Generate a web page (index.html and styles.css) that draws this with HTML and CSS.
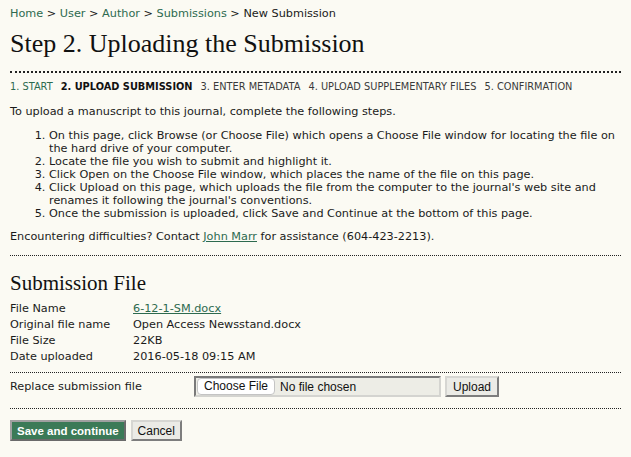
FILE: index.html
```html
<!DOCTYPE html>
<html>
<head>
<meta charset="utf-8">
<link rel="stylesheet" href="styles.css">
</head>
<body>
<div class="page">
  <div class="breadcrumb">
    <a href="#">Home</a> &gt; <a href="#">User</a> &gt; <a href="#">Author</a> &gt; <a href="#">Submissions</a> &gt; <span class="current">New Submission</span>
  </div>
  <h2 class="title">Step 2. Uploading the Submission</h2>
  <div class="separator thick"></div>
  <ul class="steps">
    <li class="done"><a href="#">1. Start</a></li>
    <li class="current">2. Upload Submission</li>
    <li>3. Enter Metadata</li>
    <li>4. Upload Supplementary Files</li>
    <li>5. Confirmation</li>
  </ul>
  <p class="intro">To upload a manuscript to this journal, complete the following steps.</p>
  <ol class="instructions">
    <li>On this page, click Browse (or Choose File) which opens a Choose File window for locating the file on the hard drive of your computer.</li>
    <li>Locate the file you wish to submit and highlight it.</li>
    <li>Click Open on the Choose File window, which places the name of the file on this page.</li>
    <li>Click Upload on this page, which uploads the file from the computer to the journal's web site and renames it following the journal's conventions.</li>
    <li>Once the submission is uploaded, click Save and Continue at the bottom of this page.</li>
  </ol>
  <p class="contact">Encountering difficulties? Contact <a href="#" class="ul">John Marr</a> for assistance (604-423-2213).</p>
  <div class="separator"></div>
  <h3 class="subtitle">Submission File</h3>
  <div class="filetable">
    <div class="label">File Name</div><div class="value"><a href="#" class="ul">6-12-1-SM.docx</a></div>
    <div class="label">Original file name</div><div class="value">Open Access Newsstand.docx</div>
    <div class="label">File Size</div><div class="value">22KB</div>
    <div class="label">Date uploaded</div><div class="value">2016-05-18 09:15 AM</div>
  </div>
  <div class="separator"></div>
  <div class="replace">
    <div class="replace-label">Replace submission file</div>
    <div class="filebox">
      <span class="choose">Choose File</span>
      <span class="nofile">No file chosen</span>
    </div>
    <button class="btn upload">Upload</button>
  </div>
  <div class="separator"></div>
  <div class="actions">
    <button class="btn primary">Save and continue</button>
    <button class="btn">Cancel</button>
  </div>
</div>
</body>
</html>
```

FILE: styles.css
```css
html, body {
  margin: 0;
  padding: 0;
  background: #fbfaf3;
}
body {
  font-family: "DejaVu Sans", Verdana, sans-serif;
  font-size: 11.25px;
  color: #1a1a1a;
}
.page {
  padding: 7px 10px 10px 10px;
}
a {
  color: #2d6a4f;
  text-decoration: none;
}
a.ul {
  text-decoration: underline;
}
.breadcrumb {
  line-height: 14px;
  color: #1a1a1a;
}
.title {
  font-family: "Liberation Serif", Georgia, serif;
  font-weight: normal;
  font-size: 26px;
  line-height: 30px;
  margin: 8px 0 12px 0;
  color: #111;
}
.separator {
  border-top: 1px dotted #222;
  height: 0;
}
.separator.thick {
  border-top-width: 2px;
}
.steps {
  list-style: none;
  margin: 7px 0 0 0;
  padding: 0;
  display: flex;
  gap: 8px;
  text-transform: uppercase;
  font-size: 9.8px;
  line-height: 14px;
  color: #3a3a3a;
}
.steps .current {
  font-weight: bold;
  color: #111;
}
.intro {
  margin: 11px 0 0 0;
  line-height: 14px;
}
.instructions {
  margin: 10px 0 0 0;
  padding-left: 39px;
  line-height: 13px;
}
.contact {
  margin: 10px 0 11px 0;
  line-height: 14px;
}
.subtitle {
  font-family: "Liberation Serif", Georgia, serif;
  font-weight: normal;
  font-size: 21px;
  line-height: 24px;
  margin: 15px 0 6px 0;
  color: #111;
}
.filetable {
  display: grid;
  grid-template-columns: 123px 1fr;
  line-height: 16px;
  margin-bottom: 7px;
}
.replace {
  display: flex;
  align-items: center;
  padding: 3px 0 11px 0;
}
.replace-label {
  width: 184px;
}
.filebox {
  box-sizing: border-box;
  display: flex;
  align-items: center;
  width: 247px;
  height: 21px;
  border: 2px solid;
  border-color: #7a7a7a #d4d4d0 #d4d4d0 #7a7a7a;
  background: #edede6;
  font-family: "Liberation Sans", Arial, sans-serif;
  font-size: 12px;
}
.choose {
  background: #fff;
  border: 1px solid #c4c4c4;
  border-radius: 4px;
  padding: 0 6px;
  line-height: 15px;
  margin-left: 1px;
  color: #111;
}
.nofile {
  margin-left: 5px;
  color: #111;
}
.btn {
  box-sizing: border-box;
  font-family: "Liberation Sans", Arial, sans-serif;
  font-size: 12px;
  background: #ebebe6;
  border: 2px solid;
  border-color: #d6d6d2 #7d7d7d #7d7d7d #d6d6d2;
  padding: 0 6px;
  height: 21px;
  color: #111;
}
.upload {
  margin-left: 4px;
}
.actions {
  display: flex;
  gap: 5px;
  margin-top: 11px;
}
.actions .btn {
  padding: 0 5px;
}
.btn.primary {
  font-size: 11.5px;
  background: #3b7a57;
  color: #fff;
  font-weight: bold;
  border-color: #a0a0a0 #6a6a6a #6a6a6a #a0a0a0;
}
```
